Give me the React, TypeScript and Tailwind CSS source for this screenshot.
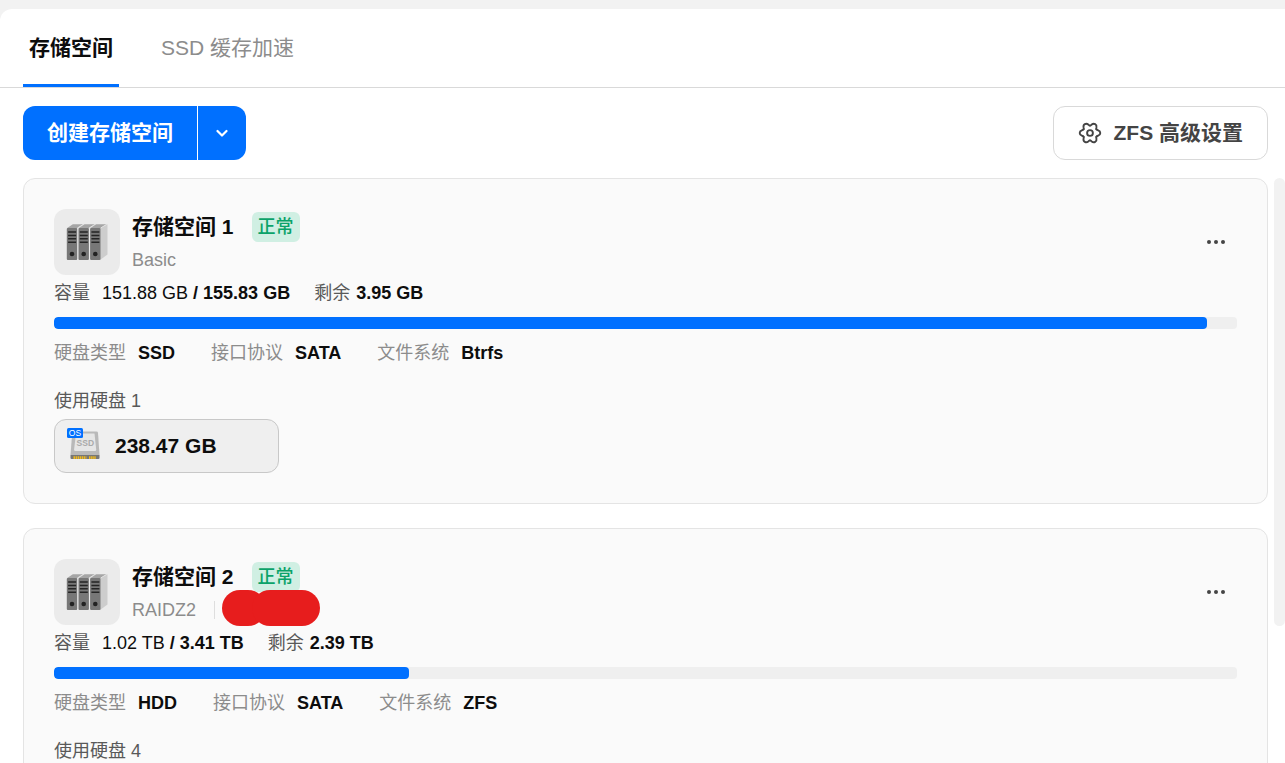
import { useState } from 'react';

interface Disk {
  size: string;
  os?: boolean;
}

interface Pool {
  name: string;
  mode: string;
  masked?: boolean;
  used: string;
  total: string;
  free: string;
  percent: number;
  diskType: string;
  protocol: string;
  fs: string;
  diskCount: number;
  disks: Disk[];
}

const pools: Pool[] = [
  {
    name: '存储空间 1',
    mode: 'Basic',
    used: '151.88 GB',
    total: '155.83 GB',
    free: '3.95 GB',
    percent: 97.46,
    diskType: 'SSD',
    protocol: 'SATA',
    fs: 'Btrfs',
    diskCount: 1,
    disks: [{ size: '238.47 GB', os: true }],
  },
  {
    name: '存储空间 2',
    mode: 'RAIDZ2',
    masked: true,
    used: '1.02 TB',
    total: '3.41 TB',
    free: '2.39 TB',
    percent: 30,
    diskType: 'HDD',
    protocol: 'SATA',
    fs: 'ZFS',
    diskCount: 4,
    disks: [],
  },
];

const tabs = ['存储空间', 'SSD 缓存加速'];

function GearIcon() {
  return (
    <svg className="w-6 h-6" viewBox="-12 -12 24 24" fill="none" stroke="currentColor" strokeWidth="1.9" strokeLinecap="round" aria-hidden="true">
      {[0, 60, 120, 180, 240, 300].map((deg) => (
        <path
          key={deg}
          transform={`rotate(${deg})`}
          d="M6.400 -3.700C6.800 -3 7.400 -2.900 8.200 -2.700C9.500 -2.300 10.300 -1.200 10.300 0C10.300 1.200 9.500 2.300 8.200 2.700C7.400 2.900 6.800 3 6.400 3.700"
        />
      ))}
      <circle r="2.900" />
    </svg>
  );
}

function ServerIcon() {
  return (
    <svg className="w-[66px] h-[66px]" viewBox="0 0 66 66" aria-hidden="true">
      <path d="M46 19L53.500 15.200V45.500L46 51Z" fill="#cdcdcd" />
      {[12.8, 24.5, 36.1].map((x) => (
        <g key={x}>
          <path d={`M${x} 19.200L${x + 6} 15.200H${x + 16.500}L${x + 10.400} 19.200Z`} fill="#a5a5a5" />
          <path d={`M${x + 10.600} 19L${x + 16.500} 15.400`} stroke="#e2e2e2" strokeWidth="1" />
          <rect x={x} y="19" width="10.400" height="32" rx="1" fill="#777" />
          <path d={`M${x + 1.300} 23H${x + 9.300}M${x + 1.300} 26.400H${x + 9.300}M${x + 1.300} 29.800H${x + 9.300}M${x + 1.300} 33.200H${x + 9.300}`} stroke="#252525" strokeWidth="1.5" />
          <circle cx={x + 5.200} cy="45" r="2.300" fill="#222" />
        </g>
      ))}
    </svg>
  );
}

function SsdIcon({ os }: { os?: boolean }) {
  return (
    <svg className="w-9 h-9" viewBox="0 0 36 36" fontFamily="'Liberation Sans', Arial, sans-serif" aria-hidden="true">
      <path d="M6.500 3.500H29.500Q30.800 3.500 31 4.800L32.500 27H3.500L5.200 4.800Q5.300 3.500 6.500 3.500Z" fill="#b9b9b9" />
      <path d="M9 5.500H27.500L29.200 21.500Q29.300 23 28 23H8.300Q7 23 7.100 21.500Z" fill="#e6e6e6" />
      <path d="M3.500 27H32.500V30Q32.500 31 31.500 31H4.500Q3.500 31 3.500 30Z" fill="#777" />
      <path d="M6.500 29.600H19.500M22 29.600H29" stroke="#f0b91e" strokeWidth="2.800" strokeDasharray="1.500 0.600" />
      <text x="18.300" y="18" textAnchor="middle" fontSize="8.500" fontWeight="700" fill="#aaa">SSD</text>
      {os && (
        <>
          <rect x="0" y="0" width="16" height="10" rx="1.500" fill="#0070ff" />
          <text x="8" y="8" textAnchor="middle" fontSize="8.500" fontWeight="400" fill="#fff">OS</text>
        </>
      )}
    </svg>
  );
}

function Spec({ label, value }: { label: string; value: string }) {
  return (
    <div className="flex gap-3">
      <dt className="text-[#8c8c8c]">{label}</dt>
      <dd className="font-bold">{value}</dd>
    </div>
  );
}

function PoolCard({ pool }: { pool: Pool }) {
  return (
    <section className="rounded-xl border border-[#e4e4e4] bg-[#fafafa] p-[30px] text-lg leading-6 text-[#0d0d0d]">
      <div className="flex items-center justify-between">
        <div className="flex gap-3">
          <div className="rounded-xl bg-[#ebebeb]">
            <ServerIcon />
          </div>
          <div>
            <div className="flex h-9 items-center gap-[18px]">
              <h2 className="text-[21px] font-bold">{pool.name}</h2>
              <span className="flex h-[30px] items-center rounded-md bg-[#d0efe3] px-1.5 font-medium text-[#0ba269]">正常</span>
            </div>
            <div className="flex h-[30px] items-center text-[#8c8c8c]">
              <span>{pool.mode}</span>
              {pool.masked && (
                <div className="relative ml-[18px] h-[18px] border-l border-[#dedede]">
                  <div className="absolute left-[7px] -top-[11px] h-9 w-11 rounded-full bg-[#e71d1d]" />
                  <div className="absolute left-[37px] -top-[11px] h-9 w-[68px] rounded-full bg-[#e71d1d]" />
                </div>
              )}
            </div>
          </div>
        </div>
        <button type="button" aria-label="更多" className="flex h-[42px] w-[42px] items-center justify-center gap-[3px]">
          <span className="h-1 w-1 rounded-full bg-[#444]" />
          <span className="h-1 w-1 rounded-full bg-[#444]" />
          <span className="h-1 w-1 rounded-full bg-[#444]" />
        </button>
      </div>

      {/* Capacity */}
      <div className="flex h-9 items-center">
        <span className="mr-3 text-[#595959]">容量</span>
        <span className="mr-6 whitespace-pre">
          {pool.used}
          <b> / {pool.total}</b>
        </span>
        <span className="mr-1.5 text-[#595959]">剩余</span>
        <b>{pool.free}</b>
      </div>
      <div className="mt-1.5 h-3 overflow-hidden rounded bg-[#efefef]">
        <div className="h-full rounded bg-[#0070ff]" style={{ width: `${pool.percent}%` }} />
      </div>

      <dl className="mt-3 flex gap-9">
        <Spec label="硬盘类型" value={pool.diskType} />
        <Spec label="接口协议" value={pool.protocol} />
        <Spec label="文件系统" value={pool.fs} />
      </dl>

      <p className="mt-6 text-[#595959]">使用硬盘 {pool.diskCount}</p>
      <div className="mt-1.5 flex gap-3">
        {pool.disks.map((disk) => (
          <button
            key={disk.size}
            type="button"
            className="flex h-[54px] w-[225px] items-center gap-3 rounded-xl border border-[#c8c8c8] bg-[#efefef] px-3 text-[21px] font-bold"
          >
            <SsdIcon os={disk.os} />
            {disk.size}
          </button>
        ))}
      </div>
    </section>
  );
}

export default function App() {
  const [active, setActive] = useState(0);

  return (
    <div className="h-screen overflow-hidden bg-[#f2f2f2] pt-[9px] font-['Liberation_Sans','Noto_Sans_CJK_SC',sans-serif]">
      <div className="flex h-full flex-col rounded-tl-xl bg-white">
        <nav className="flex shrink-0 gap-9 border-b border-[#d9d9d9] px-[23px]">
          {tabs.map((tab, i) => (
            <button
              key={tab}
              type="button"
              onClick={() => setActive(i)}
              className={`h-[78px] border-y-3 border-t-transparent px-1.5 text-[21px] ${
                active === i
                  ? 'border-b-[#0070ff] font-bold text-[#0d0d0d]'
                  : 'border-b-transparent text-[#8c8c8c]'
              }`}
            >
              {tab}
            </button>
          ))}
        </nav>

        {/* Toolbar */}
        <div className="flex shrink-0 items-center justify-between py-[18px] pl-[23px] pr-[17px] text-[21px] font-bold">
          <div className="flex h-[54px] gap-px overflow-hidden rounded-xl text-white">
            <button type="button" className="bg-[#0070ff] px-6">创建存储空间</button>
            <button type="button" aria-label="展开" className="flex w-12 items-center justify-center bg-[#0070ff]">
              <svg className="w-3 h-3" viewBox="0 0 12 12" fill="none" stroke="currentColor" strokeWidth="2.2" strokeLinecap="round" strokeLinejoin="round">
                <path d="M1.500 4L6 8.500L10.500 4" />
              </svg>
            </button>
          </div>
          <button type="button" className="flex h-[54px] items-center gap-3 rounded-xl border border-[#d9d9d9] px-6 text-[#444]">
            <GearIcon />
            ZFS 高级设置
          </button>
        </div>

        <div className="flex min-h-0 flex-1 items-start gap-1.5 overflow-hidden pl-[23px]">
          <div className="flex flex-1 flex-col gap-6">
            {pools.map((pool) => (
              <PoolCard key={pool.name} pool={pool} />
            ))}
          </div>
          <div className="h-[448px] w-[11px] rounded-md bg-[#f2f2f2]" />
        </div>
      </div>
    </div>
  );
}
